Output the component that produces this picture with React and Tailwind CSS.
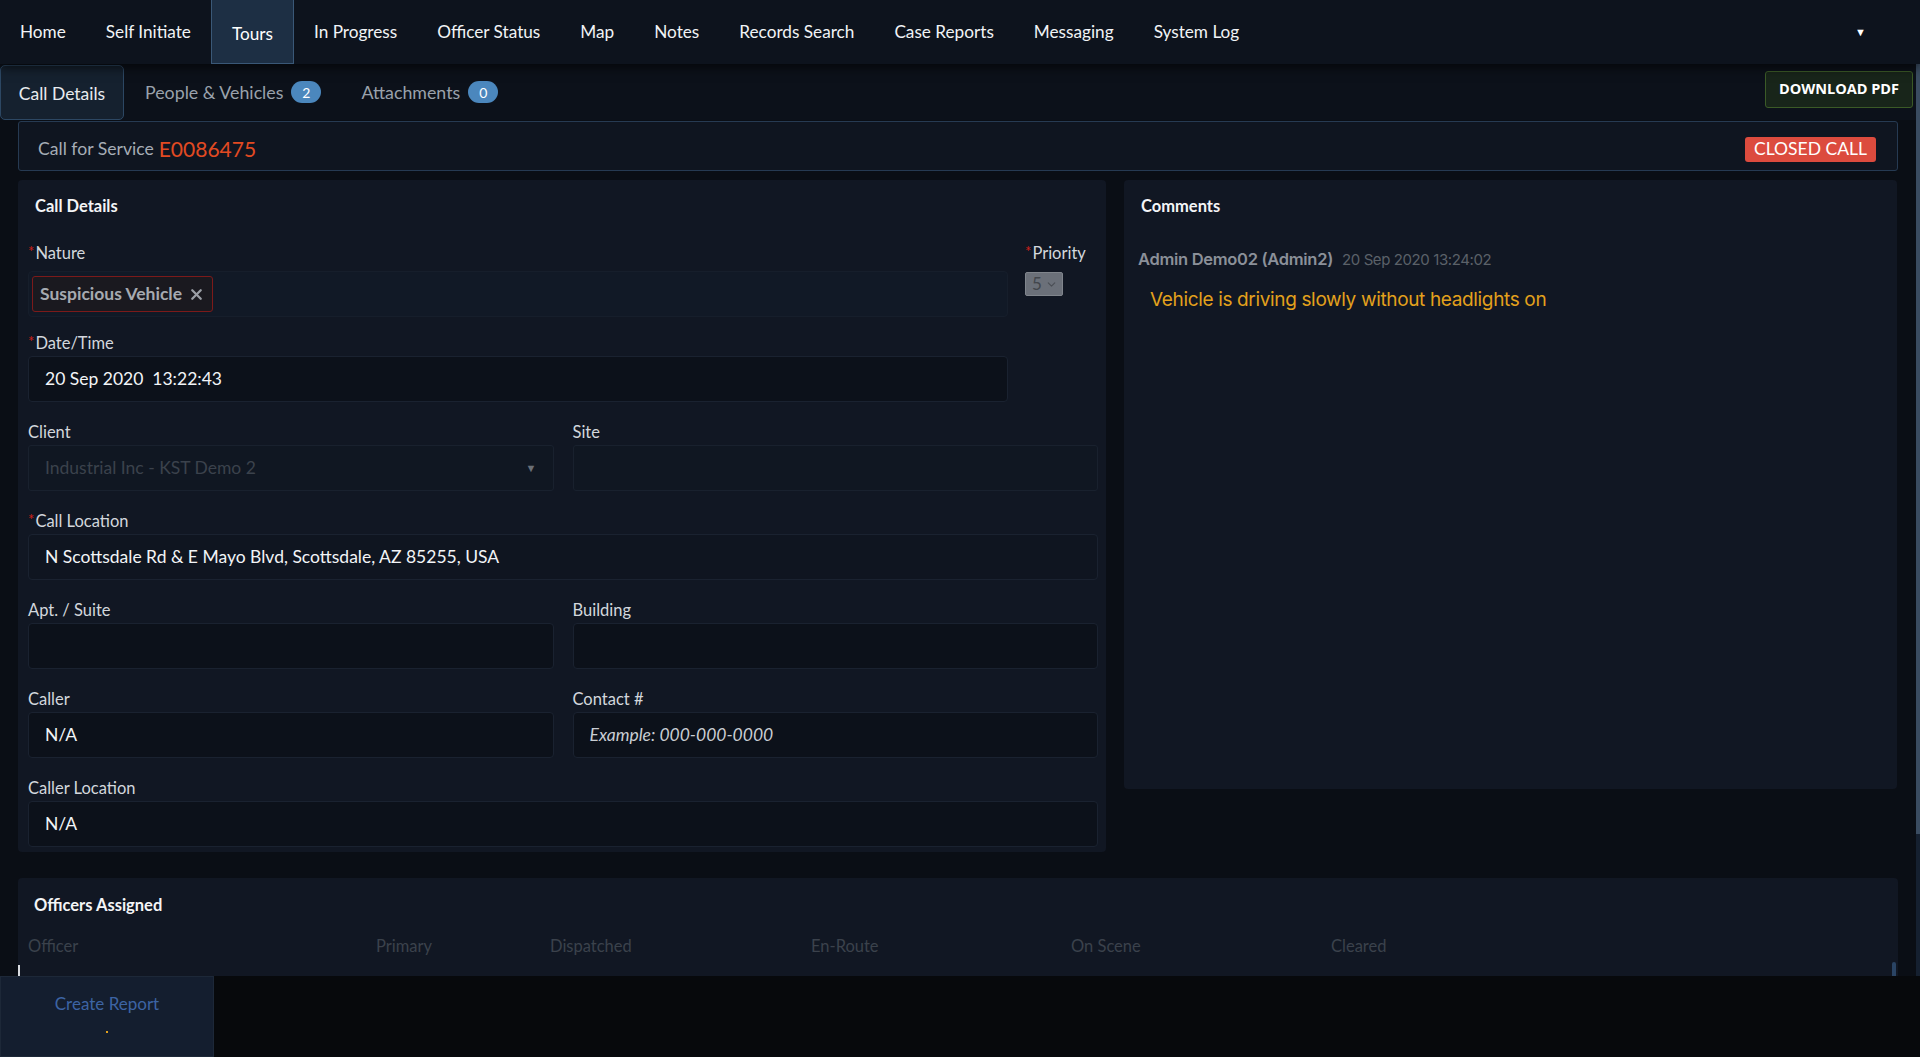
import { X, ChevronDown } from 'lucide-react'

const navItems = ['Home', 'Self Initiate', 'Tours', 'In Progress', 'Officer Status', 'Map', 'Notes', 'Records Search', 'Case Reports', 'Messaging', 'System Log']

function Label({ children, required }) {
  return (
    <div className="h-[22px] flex items-center text-[16.5px] text-[#d3d7dd] leading-none">
      {required && <span className="text-[#d0201a] text-[15px] mr-[1px] -mt-1">*</span>}
      {children}
    </div>
  )
}

function Field({ label, required, value, placeholder, tone = 'dark', className = '' }) {
  const bg = tone === 'dark' ? 'bg-[#0c111a]' : 'bg-[#0f1520]'
  return (
    <div className={className}>
      <Label required={required}>{label}</Label>
      <div className={`mt-[2px] h-[46px] rounded-[4px] border border-[#1a2230] ${bg} flex items-center px-4 text-[17.5px] whitespace-pre`}>
        {value && <span className="text-[#f2f4f7]">{value}</span>}
        {placeholder && <span className="italic text-[#c9cdd3]">{placeholder}</span>}
      </div>
    </div>
  )
}

export default function App() {
  return (
    <div className="h-screen w-full bg-[#0a0e15] font-['Lato','Noto_Sans',sans-serif] text-gray-100 flex flex-col overflow-hidden relative">
      {/* top nav */}
      <div className="h-16 shrink-0 bg-[#0d131d] flex items-stretch shadow-[0_4px_10px_rgba(0,0,0,0.6)] relative z-10 pr-1">
        {navItems.map((item) => (
          <div
            key={item}
            className={`flex items-center px-[20px] text-[17.2px] ${item === 'Tours' ? 'bg-[#1d2f44] border-x border-b border-[#3a5877] text-white pt-1' : 'text-[#f1f3f6]'}`}
          >
            {item}
          </div>
        ))}
        <div className="flex-1" />
        <div className="flex items-center pr-[50px] text-white text-[11px]">▼</div>
      </div>

      {/* scroll area */}
      <div className="flex-1 min-h-0 overflow-hidden pr-1">
        {/* tab row */}
        <div className="h-14 flex items-center bg-[#0c111a]">
          <div className="h-[55px] mt-[1px] pt-[3px] w-[124px] flex items-center justify-center rounded-[5px] border border-[#2c4763] bg-[#15212f] text-[17.5px] text-[#e8ebef]">
            Call Details
          </div>
          <div className="ml-[21px] flex items-center text-[17.8px] text-[#9aa2ac]">
            People &amp; Vehicles
            <span className="ml-2 w-[30px] h-[22px] rounded-full bg-[#4b87bd] text-white text-[14px] flex items-center justify-center">2</span>
          </div>
          <div className="ml-[40px] flex items-center text-[17.8px] text-[#9aa2ac]">
            Attachments
            <span className="ml-2 w-[30px] h-[22px] rounded-full bg-[#4b87bd] text-white text-[14px] flex items-center justify-center">0</span>
          </div>
          <div className="flex-1" />
          <div className="mr-[3px] mb-[6px] h-[37px] w-[148px] flex items-center justify-center rounded-[3px] border border-[#3b5a27] bg-[#18251a] font-['Open_Sans',sans-serif] font-bold text-[14.5px] text-white">
            DOWNLOAD PDF
          </div>
        </div>

        <div className="px-[18px] pt-px">
          {/* call for service */}
          <div className="h-[50px] rounded-[3px] border border-[#263a52] bg-[#0f1520] flex items-center pt-[6px] pl-[19px] pr-[21px]">
            <span className="text-[17.6px] text-[#a6adb6]">Call for Service</span>
            <span className="ml-[5px] text-[21px] text-[#e24a22]">E0086475</span>
            <div className="flex-1" />
            <span className="h-[25px] px-[9px] rounded-[3px] bg-[#dc4b3e] text-white text-[17.5px] flex items-center">CLOSED CALL</span>
          </div>

          <div className="mt-[9px] grid grid-cols-[1088px_773px] gap-[18px] items-start">
            {/* call details */}
            <div className="bg-[#111723] rounded-[4px] h-[672px] pl-[10px] pr-[8px]">
              <div className="pt-[8px] pl-[7px] text-[16.5px] font-bold text-[#f4f5f7] h-[44px] flex items-center">Call Details</div>
              <div className="mt-[18px] flex">
                <div className="w-[980px]">
                  <Label required>Nature</Label>
                  <div className="mt-[7px] h-[46px] rounded-[4px] border border-[#161e2b] bg-[#111926] flex items-center pl-[3px]">
                    <div className="h-[36px] px-[7px] flex items-center rounded-[3px] border border-[#7c1a1a] bg-[#1a191f] text-[17.5px] font-bold text-[#a6aab1]">
                      Suspicious Vehicle
                      <X size={17} strokeWidth={3.2} className="ml-[6px] text-[#9a9ea5]" />
                    </div>
                  </div>
                </div>
                <div className="ml-[17px]">
                  <Label required>Priority</Label>
                  <div className="mt-[8px] w-[38px] h-[24px] rounded-[2px] border border-[#80858c] bg-[#6b7079] flex items-center pl-[6px] text-[17px] text-[#42464c]">
                    5
                    <ChevronDown size={13} className="ml-[3px] text-[#4a4e55]" />
                  </div>
                </div>
              </div>

              <Field className="mt-[15px] w-[980px]" label="Date/Time" required value="20 Sep 2020  13:22:43" />

              <div className="mt-[19px] grid grid-cols-2 gap-[19px]">
                <div>
                  <Label>Client</Label>
                  <div className="mt-[2px] h-[46px] rounded-[3px] border border-[#19212e] bg-[#101722] flex items-center px-4 text-[17.5px] text-[#3b424c]">
                    Industrial Inc - KST Demo 2
                    <div className="flex-1" />
                    <span className="text-[11px] text-[#6b7077]">▼</span>
                  </div>
                </div>
                <div>
                  <Label>Site</Label>
                  <div className="mt-[2px] h-[46px] rounded-[3px] border border-[#19212e] bg-[#101722]" />
                </div>
              </div>

              <Field className="mt-[19px]" label="Call Location" required value="N Scottsdale Rd & E Mayo Blvd, Scottsdale, AZ 85255, USA" tone="mid" />

              <div className="mt-[19px] grid grid-cols-2 gap-[19px]">
                <Field label="Apt. / Suite" />
                <Field label="Building" />
              </div>
              <div className="mt-[19px] grid grid-cols-2 gap-[19px]">
                <Field label="Caller" value="N/A" />
                <Field label="Contact #" placeholder="Example: 000-000-0000" />
              </div>
              <Field className="mt-[19px]" label="Caller Location" value="N/A" />
            </div>

            {/* comments */}
            <div className="bg-[#111723] rounded-[4px] h-[609px] px-[14px]">
              <div className="pt-[8px] pl-[3px] text-[16.5px] font-bold text-[#f4f5f7] h-[44px] flex items-center">Comments</div>
              <div className="mt-[23px] flex items-baseline font-['Inter',sans-serif]">
                <span className="text-[16.5px] font-semibold text-[#8b9099] tracking-[-0.3px]">Admin Demo02 (Admin2)</span>
                <span className="ml-[9px] text-[15px] text-[#5b6169] tracking-[-0.4px]">20 Sep 2020 13:24:02</span>
              </div>
              <div className="mt-[14px] pl-[12px] font-['Inter',sans-serif] text-[19px] text-[#e3a11c] tracking-[-0.35px]">
                Vehicle is driving slowly without headlights on
              </div>
            </div>
          </div>

          {/* officers assigned */}
          <div className="mt-[26px] bg-[#111723] rounded-[4px] h-[140px] relative">
            <div className="pt-[8px] pl-[16px] text-[16.5px] font-bold text-[#f4f5f7] h-[46px] flex items-center">Officers Assigned</div>
            <div className="mt-[10px] flex text-[16.5px] text-[#3b424c] pl-[10px]">
              <span className="w-[348px]">Officer</span>
              <span className="w-[174px]">Primary</span>
              <span className="w-[261px]">Dispatched</span>
              <span className="w-[260px]">En-Route</span>
              <span className="w-[260px]">On Scene</span>
              <span>Cleared</span>
            </div>
            <div className="absolute left-0 top-[87px] w-[2px] h-[20px] bg-[#d8dbe0]" />
            <div className="absolute right-[2px] top-[84px] w-[4px] h-[30px] rounded-full bg-[#2a4464]" />
          </div>
        </div>
      </div>

      {/* footer */}
      <div className="h-[81px] shrink-0 bg-[#07090c] flex">
        <div className="w-[214px] bg-[#141e2f] border border-[#1d2838] flex flex-col items-center pt-[14px]">
          <span className="text-[17px] text-[#3d64a4]">Create Report</span>
          <span className="mt-[14px] w-[2px] h-[2px] bg-[#e3a11c]" />
        </div>
      </div>

      {/* page scrollbar */}
      <div className="absolute right-0 top-0 w-[4px] h-[976px] bg-[#152030]">
        <div className="w-full h-[834px] bg-[#3a4c61]" />
      </div>
    </div>
  )
}
